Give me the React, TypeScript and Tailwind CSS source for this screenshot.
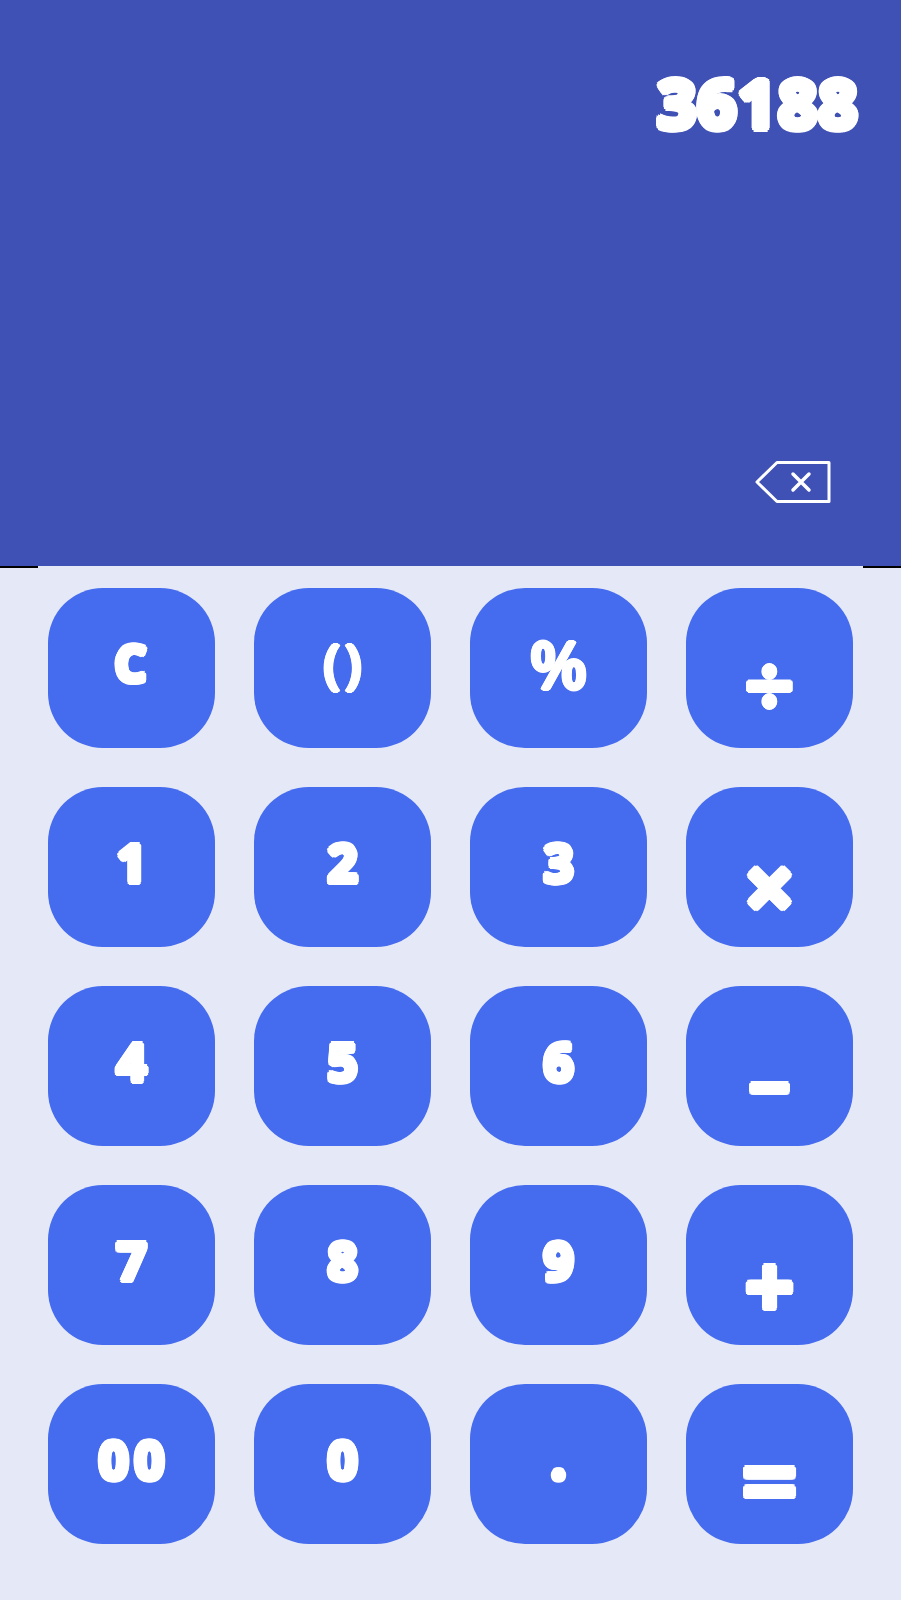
import React from 'react';

interface CalcKey {
  label: string;
  textClass: string;
}

// round outline on the glyphs, the original face is a fat rounded one
const round3 =
  '[text-shadow:3px_0_0.5px_white,2.6px_1.5px_0.5px_white,1.5px_2.6px_0.5px_white,0_3px_0.5px_white,-1.5px_2.6px_0.5px_white,-2.6px_1.5px_0.5px_white,-3px_0_0.5px_white,-2.6px_-1.5px_0.5px_white,-1.5px_-2.6px_0.5px_white,0_-3px_0.5px_white,1.5px_-2.6px_0.5px_white,2.6px_-1.5px_0.5px_white]';
const round2 =
  '[text-shadow:2px_0_0.5px_white,1.4px_1.4px_0.5px_white,0_2px_0.5px_white,-1.4px_1.4px_0.5px_white,-2px_0_0.5px_white,-1.4px_-1.4px_0.5px_white,0_-2px_0.5px_white,1.4px_-1.4px_0.5px_white]';
const round4 =
  '[text-shadow:4px_0_0.5px_white,3.5px_2px_0.5px_white,2px_3.5px_0.5px_white,0_4px_0.5px_white,-2px_3.5px_0.5px_white,-3.5px_2px_0.5px_white,-4px_0_0.5px_white,-3.5px_-2px_0.5px_white,-2px_-3.5px_0.5px_white,0_-4px_0.5px_white,2px_-3.5px_0.5px_white,3.5px_-2px_0.5px_white]';

const digit = `pb-[10px] text-[52px] font-bold ${round3}`;

const keys: CalcKey[] = [
  { label: 'C', textClass: `pb-[10px] pr-[2px] text-[50px] font-bold ${round3}` },
  { label: '()', textClass: `pb-[10px] pl-[5px] text-[52px] font-semibold tracking-[5px] ${round2}` },
  { label: '%', textClass: `pb-[10px] text-[66px] font-semibold ${round2}` },
  { label: '÷', textClass: `pt-[32px] text-[88px] font-bold ${round2}` },
  { label: '1', textClass: digit },
  { label: '2', textClass: digit },
  { label: '3', textClass: digit },
  { label: '×', textClass: `pt-[36px] text-[90px] font-bold ${round3}` },
  { label: '4', textClass: digit },
  { label: '5', textClass: digit },
  { label: '6', textClass: digit },
  { label: '−', textClass: `pt-[38px] text-[72px] font-bold ${round3}` },
  { label: '7', textClass: digit },
  { label: '8', textClass: digit },
  { label: '9', textClass: digit },
  { label: '+', textClass: `pt-[40px] text-[86px] font-bold ${round3}` },
  { label: '00', textClass: `pb-[10px] pl-[6px] text-[52px] font-bold tracking-[6px] ${round3}` },
  { label: '0', textClass: digit },
  { label: '.', textClass: `pb-[14px] text-[56px] font-bold ${round3}` },
  { label: '=', textClass: `pt-[28px] text-[100px] font-semibold ${round3}` },
];

function BackspaceIcon() {
  return (
    <svg width="76" height="44" viewBox="0 0 76 44" fill="none" stroke="white" strokeWidth="3" strokeLinejoin="round">
      <path d="M2 22 L22 2.5 H74 V41.5 H22 Z" />
      <path d="M38 14 L54 30 M54 14 L38 30" strokeWidth="3.5" strokeLinecap="round" />
    </svg>
  );
}

export default function App() {
  return (
    <div className="h-[1600px] w-[901px] bg-[#e5e9f7] font-['Open_Sans',sans-serif]">
      {/* Display */}
      <div className="flex h-[566px] flex-col items-end justify-between bg-[#3f51b5] pb-[62px] pr-[42px] pt-[58px]">
        <div className={`text-[67px] leading-[88px] font-bold tracking-[2px] text-white ${round4}`}>36188</div>
        <div className="mr-[28px]">
          <BackspaceIcon />
        </div>
      </div>
      <div className="flex h-[2px] justify-between">
        <div className="w-[38px] bg-black" />
        <div className="w-[38px] bg-black" />
      </div>

      {/* Keypad */}
      <div className="grid grid-cols-[167px_177px_177px_167px] gap-x-[39px] gap-y-[39px] px-[48px] pt-[20px]">
        {keys.map((key) => (
          <button
            key={key.label}
            className={`flex h-[160px] items-center justify-center rounded-[55px] bg-[#456bee] leading-none text-white ${key.textClass}`}
          >
            {key.label}
          </button>
        ))}
      </div>
    </div>
  );
}
